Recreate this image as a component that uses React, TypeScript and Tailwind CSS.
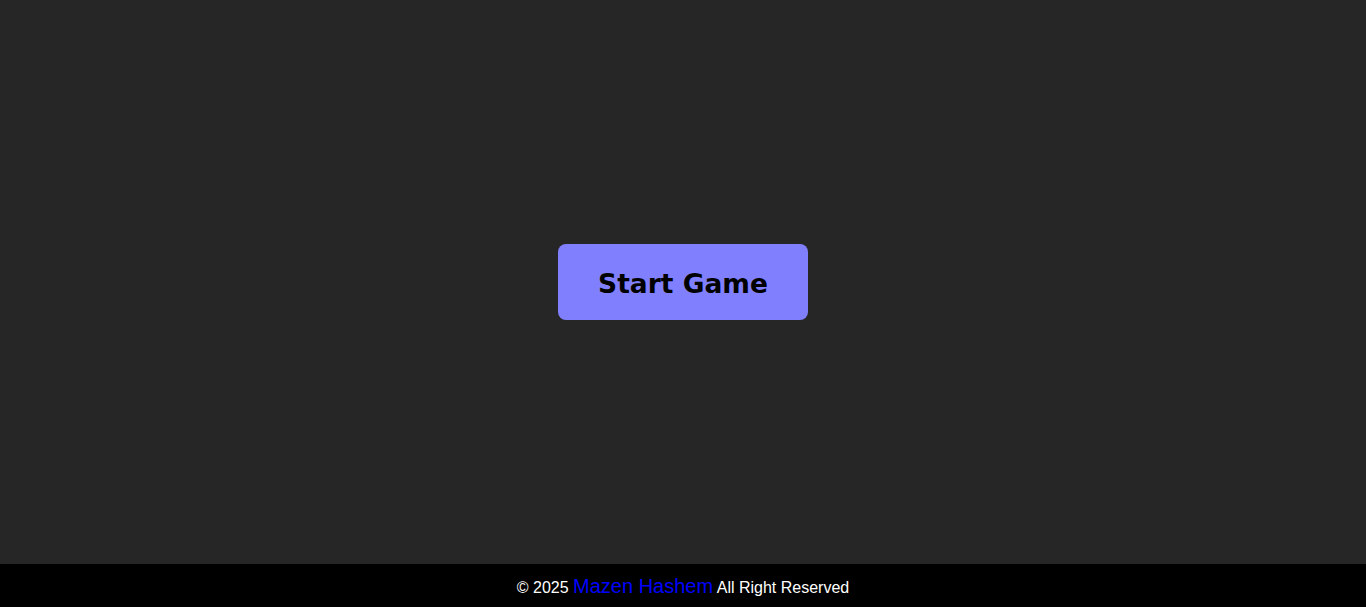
import React from 'react';

const App: React.FC = () => {
  return (
    <div className="min-h-screen flex flex-col bg-[#262626]">
      <main className="flex-1 flex items-center justify-center">
        <button
          className="w-[250px] h-[76px] rounded-lg bg-[#8080ff] text-black font-bold text-[26.5px] pt-[4px]"
          style={{ fontFamily: '"DejaVu Sans", Verdana, sans-serif' }}
        >
          Start Game
        </button>
      </main>

      {/* Footer */}
      <footer
        className="h-[43px] bg-black text-white flex items-center justify-center text-base pt-[1px]"
        style={{ fontFamily: '"Liberation Sans", Arial, sans-serif' }}
      >
        <p>
          © 2025 <span className="text-[#0000ff] text-[20px]">Mazen Hashem</span> All Right Reserved
        </p>
      </footer>
    </div>
  );
};

export default App;
